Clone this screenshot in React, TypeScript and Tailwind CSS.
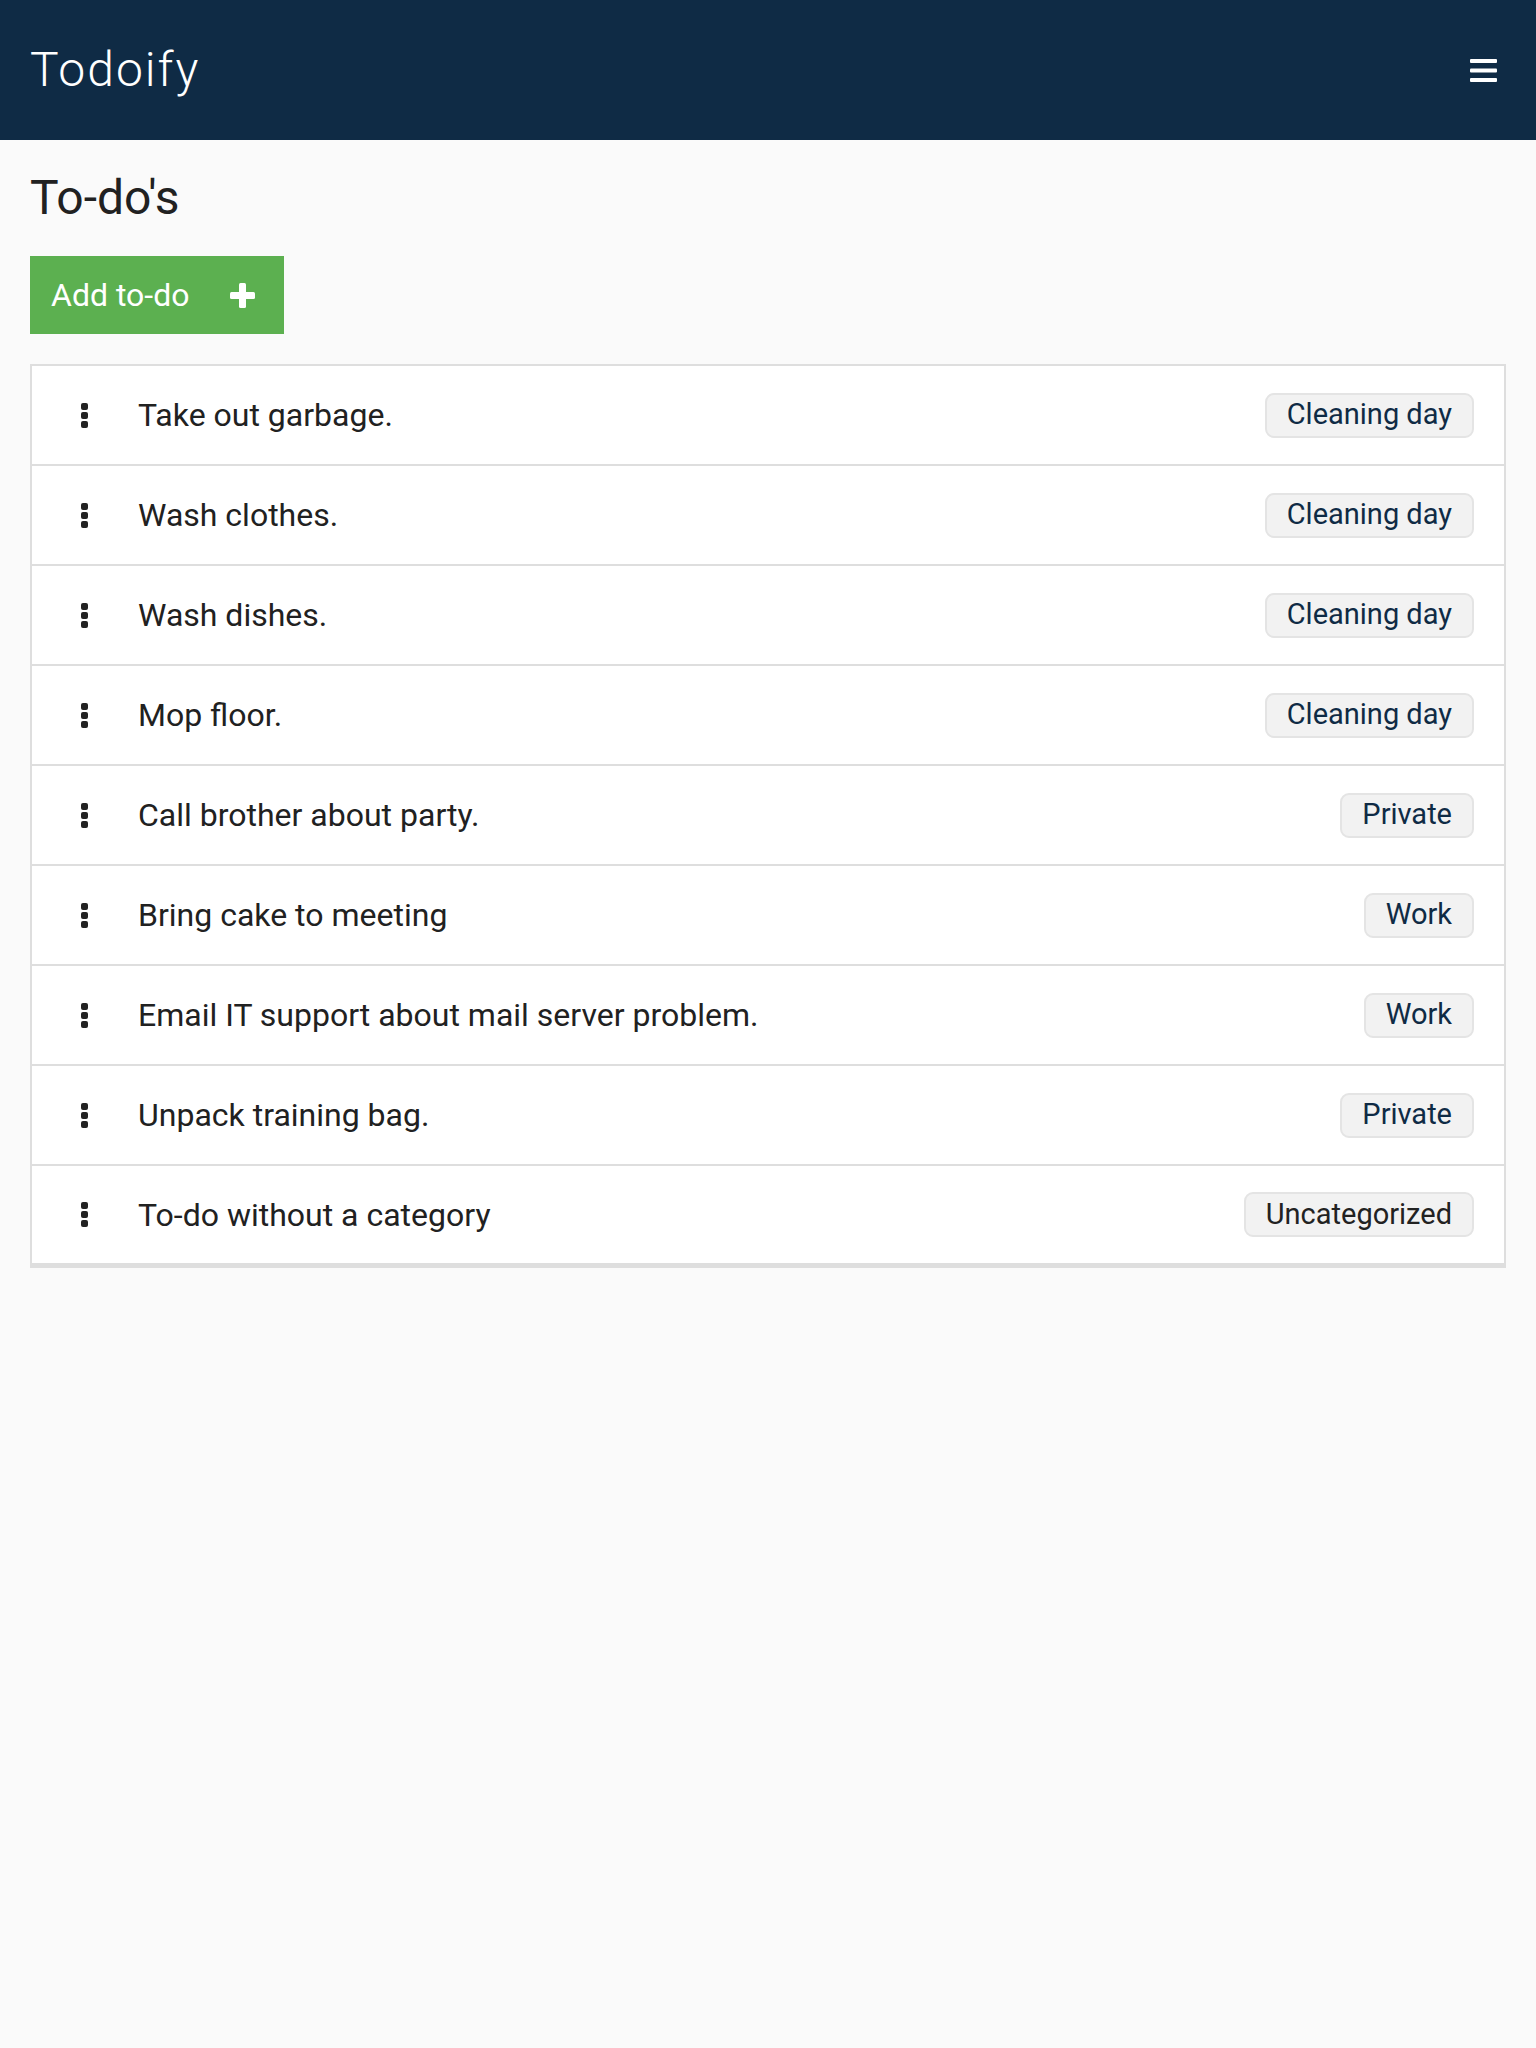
const todos = [
  { text: "Take out garbage.", category: "Cleaning day" },
  { text: "Wash clothes.", category: "Cleaning day" },
  { text: "Wash dishes.", category: "Cleaning day" },
  { text: "Mop floor.", category: "Cleaning day" },
  { text: "Call brother about party.", category: "Private" },
  { text: "Bring cake to meeting", category: "Work" },
  { text: "Email IT support about mail server problem.", category: "Work" },
  { text: "Unpack training bag.", category: "Private" },
  { text: "To-do without a category", category: null },
];

function Kebab() {
  return (
    <svg width="7" height="25" viewBox="0 0 7 25" className="shrink-0">
      <rect x="0" y="0" width="7" height="7" rx="2" fill="#222" />
      <rect x="0" y="9" width="7" height="7" rx="2" fill="#222" />
      <rect x="0" y="18" width="7" height="7" rx="2" fill="#222" />
    </svg>
  );
}

export default function App() {
  return (
    <div className="min-h-[2048px] bg-[#fafafa] font-['Roboto',sans-serif] text-[#212121]">
      <header className="h-[140px] bg-[#0f2b45] flex items-center justify-between pl-[30px] pr-[39px]">
        <h1 className="text-[48px] font-light tracking-[2px] text-white leading-none">Todoify</h1>
        <svg width="27" height="23" viewBox="0 0 27 23">
          <rect x="0" y="0" width="27" height="4" rx="1" fill="#fff" />
          <rect x="0" y="9.5" width="27" height="4" rx="1" fill="#fff" />
          <rect x="0" y="19" width="27" height="4" rx="1" fill="#fff" />
        </svg>
      </header>

      <main className="px-[30px] pt-[30px]">
        <h2 className="text-[48px] leading-[56px] font-normal">To-do's</h2>

        <button className="mt-[30px] h-[78px] w-[254px] bg-[#5cb050] text-white flex items-center pl-[21px] text-[32px]">
          <span>Add to-do</span>
          <svg width="25" height="25" viewBox="0 0 25 25" className="ml-[41px]">
            <rect x="9" y="0" width="7" height="25" rx="1.5" fill="#fff" />
            <rect x="0" y="9" width="25" height="7" rx="1.5" fill="#fff" />
          </svg>
        </button>

        <ul className="mt-[30px] bg-white border-2 border-[#dedede]">
          {todos.map((todo, i) => (
            <li
              key={i}
              className="h-[100px] flex items-center pl-[49px] pr-[30px] border-b-2 border-[#dedede] last:border-b-[3px]"
            >
              <Kebab />
              <span className="ml-[50px] text-[32px] flex-1">{todo.text}</span>
              <span
                className={
                  "h-[45px] flex items-center px-[20px] rounded-[9px] bg-[#f2f2f2] border-2 border-[#e4e4e4] text-[29px] " +
                  (todo.category ? "text-[#0f2b45]" : "text-[#222]")
                }
              >
                {todo.category ?? "Uncategorized"}
              </span>
            </li>
          ))}
        </ul>
      </main>
    </div>
  );
}
